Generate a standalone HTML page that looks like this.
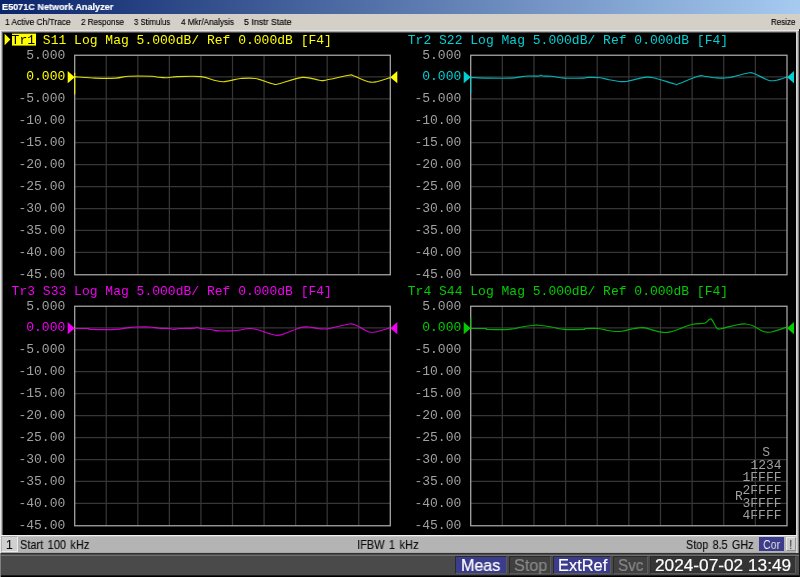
<!DOCTYPE html>
<html lang="en">
<head>
<meta charset="utf-8">
<title>E5071C Network Analyzer</title>
<style>
html,body{margin:0;padding:0;background:#000;}
#root{position:relative;width:800px;height:577px;overflow:hidden;background:#d4d0c8;font-family:"Liberation Sans", "DejaVu Sans", sans-serif;}
#root div,#root span{position:absolute;white-space:nowrap;box-sizing:border-box;}
#root span{display:inline-block;transform-origin:0 0;will-change:transform;}
.title{left:0;top:0;width:800px;height:14px;background:linear-gradient(to right,#0a246a 0%,#a6caf0 100%);}
.tt{color:#fff;font-weight:bold;font-size:9.2px;line-height:11px;-webkit-text-stroke:0.2px #fff;}
.menu{left:0;top:14px;width:800px;height:16px;background:#d4d0c8;}
.mm{color:#000;font-size:9px;line-height:10px;-webkit-text-stroke:0.15px #000;}
.frame{left:0;top:30px;width:799px;height:506px;background:#000;}
.scr{position:absolute;left:3px;top:33px;will-change:transform;}
.chbar{left:1px;top:536px;width:795px;height:17px;background:linear-gradient(to bottom,#c4c4c4 0,#c4c4c4 1px,#b4b4b4 1px,#b4b4b4 16px,#a8a8a8 16px);}
.cc{color:#0c0c0c;-webkit-text-stroke:0.12px #0c0c0c;font-size:12.2px;line-height:14px;word-spacing:1.5px;}
.stbar{left:0;top:553px;width:799px;height:24px;background:linear-gradient(to bottom,#303030 0,#303030 1px,#4c4c4c 1px,#4c4c4c 2px,#707070 2px,#707070 3px,#4a4a4a 3px,#4a4a4a 22px,#1c1c1c 22px,#1c1c1c 23px,#000 23px);border-left:1px solid #808080;}
.sb{top:556px;height:18px;border:1px solid #2a2a2a;border-right-color:#5a5a5a;border-bottom-color:#5a5a5a;}
.ss{font-size:16.4px;line-height:17px;-webkit-text-stroke:0.2px currentColor;}
.on{background:#3c3c8c;}
.off{background:#404040;}
</style>
</head>
<body>
<div id="root">
<div class="title"></div>
<div class="menu"></div>
<div class="frame"></div>
<div style="left:0;top:30px;width:799px;height:1px;background:#e6e6e6;"></div>
<div style="left:0;top:30px;width:1px;height:523px;background:#e8e8e8;"></div>
<div style="left:1px;top:31px;width:798px;height:1px;background:#a8a8a8;"></div>
<div style="left:1px;top:31px;width:1px;height:504px;background:#b4b4b4;"></div>
<div style="left:2px;top:32px;width:797px;height:1px;background:#484848;"></div>
<div style="left:2px;top:32px;width:1px;height:503px;background:#5c5c5c;"></div>
<svg class="scr" width="793" height="502" viewBox="3 33 793 502" font-family='"Liberation Mono", "DejaVu Sans Mono", monospace' font-size="13.0" letter-spacing="0.0112" xml:space="preserve">
<rect x="3" y="33" width="793" height="502" fill="#000"/>
<path d="M106.26 55.25V274.75M74.70 76.80H390.30M137.82 55.25V274.75M74.70 98.75H390.30M169.38 55.25V274.75M74.70 120.70H390.30M200.94 55.25V274.75M74.70 142.65H390.30M232.50 55.25V274.75M74.70 164.60H390.30M264.06 55.25V274.75M74.70 186.55H390.30M295.62 55.25V274.75M74.70 208.50H390.30M327.18 55.25V274.75M74.70 230.45H390.30M358.74 55.25V274.75M74.70 252.40H390.30" stroke="#363636" stroke-width="1.25" fill="none"/>
<rect x="74.70" y="55.25" width="315.60" height="219.50" stroke="#a4a4a4" stroke-width="1.3" fill="none"/>
<rect x="12" y="33.6" width="24" height="12" fill="#ffff00"/>
<path d="M4.6 33.8L10.4 39.5L4.6 45.2Z" fill="#ffff00"/>
<text x="11.60" y="44.05" fill="#000">Tr1</text>
<text x="42.85" y="44.05" fill="#ffff00">S11 Log Mag 5.000dB/ Ref 0.000dB [F4]</text>
<text x="26.24" y="58.50" fill="#a0a0a0">5.000</text>
<text x="26.24" y="80.45" fill="#ffff00">0.000</text>
<text x="18.42" y="102.40" fill="#a0a0a0">-5.000</text>
<text x="18.42" y="124.35" fill="#a0a0a0">-10.00</text>
<text x="18.42" y="146.30" fill="#a0a0a0">-15.00</text>
<text x="18.42" y="168.25" fill="#a0a0a0">-20.00</text>
<text x="18.42" y="190.20" fill="#a0a0a0">-25.00</text>
<text x="18.42" y="212.15" fill="#a0a0a0">-30.00</text>
<text x="18.42" y="234.10" fill="#a0a0a0">-35.00</text>
<text x="18.42" y="256.05" fill="#a0a0a0">-40.00</text>
<text x="18.42" y="278.00" fill="#a0a0a0">-45.00</text>
<path d="M74.7 72.8L74.7 94.0L74.7 77.0C75.2 77.0 74.5 76.8 77.8 77.0C81.1 77.2 88.4 77.9 94.8 78.1C101.2 78.3 110.3 78.4 116.0 78.1C121.7 77.8 122.8 76.5 128.8 76.2C134.8 75.9 147.6 76.1 152.2 76.2C156.8 76.3 154.0 76.8 156.5 77.0C159.0 77.2 163.4 77.8 167.0 77.7C170.6 77.6 172.1 76.8 177.8 76.6C183.5 76.4 195.0 76.0 201.0 76.6C207.0 77.2 210.4 79.3 214.0 80.2C217.6 81.1 219.7 81.6 222.4 81.7C225.1 81.8 227.0 81.1 230.0 80.6C233.0 80.1 236.3 78.8 240.6 78.5C244.8 78.2 250.2 77.6 255.5 78.5C260.8 79.4 268.6 82.9 272.5 83.8C276.4 84.7 274.0 84.9 279.0 83.8C284.0 82.7 295.6 78.0 302.3 77.4C309.0 76.8 315.5 79.7 319.4 80.2C323.3 80.7 320.8 81.0 325.7 80.2C330.6 79.4 344.4 76.0 349.0 75.3C353.6 74.5 350.2 74.6 353.4 75.7C356.6 76.8 364.4 80.7 368.3 81.7C372.2 82.7 373.1 82.4 376.8 81.7C380.5 81.0 388.1 78.3 390.3 77.6" stroke="#ffff00" stroke-width="1.15" fill="none" stroke-linejoin="round" opacity="0.85"/>
<path d="M67.70 71.10L74.70 77.20L67.70 83.30Z" fill="#ffff00"/>
<path d="M397.30 71.10L390.30 77.20L397.30 83.30Z" fill="#ffff00"/>
<path d="M502.33 55.25V274.75M470.70 76.80H787.00M533.96 55.25V274.75M470.70 98.75H787.00M565.59 55.25V274.75M470.70 120.70H787.00M597.22 55.25V274.75M470.70 142.65H787.00M628.85 55.25V274.75M470.70 164.60H787.00M660.48 55.25V274.75M470.70 186.55H787.00M692.11 55.25V274.75M470.70 208.50H787.00M723.74 55.25V274.75M470.70 230.45H787.00M755.37 55.25V274.75M470.70 252.40H787.00" stroke="#363636" stroke-width="1.25" fill="none"/>
<rect x="470.70" y="55.25" width="316.30" height="219.50" stroke="#a4a4a4" stroke-width="1.3" fill="none"/>
<text x="407.80" y="44.05" fill="#00d0d4">Tr2 S22 Log Mag 5.000dB/ Ref 0.000dB [F4]</text>
<text x="422.24" y="58.50" fill="#a0a0a0">5.000</text>
<text x="422.24" y="80.45" fill="#00d0d4">0.000</text>
<text x="414.43" y="102.40" fill="#a0a0a0">-5.000</text>
<text x="414.43" y="124.35" fill="#a0a0a0">-10.00</text>
<text x="414.43" y="146.30" fill="#a0a0a0">-15.00</text>
<text x="414.43" y="168.25" fill="#a0a0a0">-20.00</text>
<text x="414.43" y="190.20" fill="#a0a0a0">-25.00</text>
<text x="414.43" y="212.15" fill="#a0a0a0">-30.00</text>
<text x="414.43" y="234.10" fill="#a0a0a0">-35.00</text>
<text x="414.43" y="256.05" fill="#a0a0a0">-40.00</text>
<text x="414.43" y="278.00" fill="#a0a0a0">-45.00</text>
<path d="M470.7 77.0L470.7 93.0L470.7 77.4C473.5 77.5 481.0 78.0 487.7 78.1C494.4 78.2 505.3 78.3 511.0 78.1C516.7 77.8 518.9 76.9 521.7 76.6C524.5 76.2 525.2 76.1 528.0 76.0C530.8 75.9 536.6 76.2 538.7 76.0C540.9 75.8 540.2 75.1 540.9 75.1C541.6 75.1 541.2 75.8 543.0 76.0C544.8 76.2 548.0 75.9 551.5 76.2C555.0 76.5 559.0 77.8 564.3 78.1C569.6 78.4 579.5 78.2 583.4 78.1C587.3 78.0 584.9 77.5 587.7 77.4C590.5 77.3 596.9 77.3 600.4 77.7C603.9 78.1 605.8 79.2 609.0 79.8C612.2 80.4 616.8 81.2 619.6 81.5C622.4 81.8 624.3 81.7 626.0 81.5C627.7 81.3 626.8 81.3 630.0 80.6C633.2 79.9 641.1 77.9 645.0 77.4C648.9 76.9 648.4 76.6 653.4 77.7C658.4 78.8 670.6 83.0 674.7 84.0C678.8 85.0 674.1 85.3 678.0 84.0C681.9 82.7 693.6 77.5 698.0 76.2C702.4 74.9 701.7 76.0 704.5 76.2C707.3 76.5 711.1 77.5 715.0 77.7C718.9 78.0 722.7 78.5 728.0 77.7C733.3 77.0 742.8 74.0 747.0 73.2C751.2 72.5 749.9 72.0 753.4 73.2C756.9 74.4 764.4 79.0 768.3 80.2C772.2 81.4 773.7 80.7 776.8 80.2C779.9 79.7 785.3 77.5 787.0 77.0" stroke="#00d0d4" stroke-width="1.15" fill="none" stroke-linejoin="round" opacity="0.85"/>
<path d="M463.70 71.10L470.70 77.20L463.70 83.30Z" fill="#00d0d4"/>
<path d="M794.00 71.10L787.00 77.20L794.00 83.30Z" fill="#00d0d4"/>
<path d="M106.26 306.25V525.75M74.70 327.80H390.30M137.82 306.25V525.75M74.70 349.75H390.30M169.38 306.25V525.75M74.70 371.70H390.30M200.94 306.25V525.75M74.70 393.65H390.30M232.50 306.25V525.75M74.70 415.60H390.30M264.06 306.25V525.75M74.70 437.55H390.30M295.62 306.25V525.75M74.70 459.50H390.30M327.18 306.25V525.75M74.70 481.45H390.30M358.74 306.25V525.75M74.70 503.40H390.30" stroke="#363636" stroke-width="1.25" fill="none"/>
<rect x="74.70" y="306.25" width="315.60" height="219.50" stroke="#a4a4a4" stroke-width="1.3" fill="none"/>
<text x="11.60" y="295.05" fill="#f000f0">Tr3 S33 Log Mag 5.000dB/ Ref 0.000dB [F4]</text>
<text x="26.24" y="309.50" fill="#a0a0a0">5.000</text>
<text x="26.24" y="331.45" fill="#f000f0">0.000</text>
<text x="18.42" y="353.40" fill="#a0a0a0">-5.000</text>
<text x="18.42" y="375.35" fill="#a0a0a0">-10.00</text>
<text x="18.42" y="397.30" fill="#a0a0a0">-15.00</text>
<text x="18.42" y="419.25" fill="#a0a0a0">-20.00</text>
<text x="18.42" y="441.20" fill="#a0a0a0">-25.00</text>
<text x="18.42" y="463.15" fill="#a0a0a0">-30.00</text>
<text x="18.42" y="485.10" fill="#a0a0a0">-35.00</text>
<text x="18.42" y="507.05" fill="#a0a0a0">-40.00</text>
<text x="18.42" y="529.00" fill="#a0a0a0">-45.00</text>
<path d="M74.7 328.5C77.0 328.5 85.8 328.4 88.4 328.5C91.0 328.6 85.9 329.2 90.5 329.4C95.1 329.5 110.0 329.6 116.0 329.4C122.0 329.1 123.5 328.3 126.7 327.9C129.9 327.5 131.3 327.1 135.2 327.0C139.1 326.9 146.1 326.8 150.0 327.0C153.9 327.2 155.4 327.9 158.6 328.1C161.8 328.4 166.8 328.3 169.3 328.5C171.8 328.7 171.7 329.4 173.5 329.4C175.3 329.4 176.4 328.7 180.0 328.5C183.6 328.3 192.0 328.3 194.8 328.1C197.6 327.9 196.0 327.3 197.0 327.4C198.0 327.5 198.5 328.1 201.0 328.5C203.5 328.9 208.9 329.4 211.8 329.8C214.7 330.2 215.2 330.7 218.2 330.9C221.2 331.1 226.6 331.0 230.0 330.9C233.4 330.8 235.3 330.6 238.5 330.2C241.7 329.8 245.8 328.6 249.0 328.5C252.2 328.4 253.8 328.8 257.7 329.8C261.6 330.8 268.6 333.6 272.5 334.5C276.4 335.4 276.4 336.0 281.0 334.9C285.6 333.8 295.4 329.0 300.0 327.7C304.6 326.4 305.5 326.8 308.7 327.0C311.9 327.2 316.2 328.4 319.4 328.7C322.6 329.0 323.4 329.4 328.0 328.7C332.6 328.0 342.6 325.2 347.0 324.5C351.4 323.8 350.9 323.3 354.5 324.5C358.1 325.7 364.6 330.5 368.3 331.7C372.0 332.9 373.1 332.3 376.8 331.7C380.5 331.1 388.1 328.4 390.3 327.8" stroke="#f000f0" stroke-width="1.15" fill="none" stroke-linejoin="round" opacity="0.85"/>
<path d="M67.70 322.10L74.70 328.20L67.70 334.30Z" fill="#f000f0"/>
<path d="M397.30 322.10L390.30 328.20L397.30 334.30Z" fill="#f000f0"/>
<path d="M502.33 306.25V525.75M470.70 327.80H787.00M533.96 306.25V525.75M470.70 349.75H787.00M565.59 306.25V525.75M470.70 371.70H787.00M597.22 306.25V525.75M470.70 393.65H787.00M628.85 306.25V525.75M470.70 415.60H787.00M660.48 306.25V525.75M470.70 437.55H787.00M692.11 306.25V525.75M470.70 459.50H787.00M723.74 306.25V525.75M470.70 481.45H787.00M755.37 306.25V525.75M470.70 503.40H787.00" stroke="#363636" stroke-width="1.25" fill="none"/>
<rect x="470.70" y="306.25" width="316.30" height="219.50" stroke="#a4a4a4" stroke-width="1.3" fill="none"/>
<text x="407.80" y="295.05" fill="#00cc00">Tr4 S44 Log Mag 5.000dB/ Ref 0.000dB [F4]</text>
<text x="422.24" y="309.50" fill="#a0a0a0">5.000</text>
<text x="422.24" y="331.45" fill="#00cc00">0.000</text>
<text x="414.43" y="353.40" fill="#a0a0a0">-5.000</text>
<text x="414.43" y="375.35" fill="#a0a0a0">-10.00</text>
<text x="414.43" y="397.30" fill="#a0a0a0">-15.00</text>
<text x="414.43" y="419.25" fill="#a0a0a0">-20.00</text>
<text x="414.43" y="441.20" fill="#a0a0a0">-25.00</text>
<text x="414.43" y="463.15" fill="#a0a0a0">-30.00</text>
<text x="414.43" y="485.10" fill="#a0a0a0">-35.00</text>
<text x="414.43" y="507.05" fill="#a0a0a0">-40.00</text>
<text x="414.43" y="529.00" fill="#a0a0a0">-45.00</text>
<path d="M470.7 317.4L470.7 328.5C473.2 328.5 482.7 328.4 485.5 328.5C488.3 328.6 483.8 329.2 487.7 329.4C491.6 329.5 503.3 329.8 509.0 329.4C514.7 329.0 517.5 327.7 521.7 327.0C526.0 326.3 531.7 325.6 534.5 325.3C537.3 325.0 535.9 325.0 538.7 325.3C541.5 325.6 547.2 326.3 551.5 327.0C555.8 327.7 559.0 329.0 564.3 329.4C569.6 329.8 579.9 329.5 583.4 329.4C586.9 329.2 583.0 328.6 585.5 328.5C588.0 328.4 594.8 328.2 598.3 328.5C601.8 328.8 604.3 329.7 606.8 330.2C609.3 330.7 610.7 331.1 613.2 331.3C615.7 331.5 618.9 331.6 621.7 331.3C624.5 331.0 627.2 330.0 630.0 329.4C632.8 328.8 636.0 328.1 638.5 327.9C641.0 327.6 641.5 327.2 645.0 327.9C648.5 328.6 655.6 331.2 659.8 331.9C664.0 332.6 665.1 333.1 670.4 331.9C675.7 330.7 686.0 325.9 691.7 324.5C697.4 323.1 701.3 324.1 704.5 323.2C707.7 322.3 708.8 318.0 710.9 318.9C713.0 319.8 715.1 327.0 717.2 328.5C719.3 330.0 720.1 328.8 723.6 328.1C727.1 327.4 734.8 325.2 738.5 324.5C742.2 323.8 743.5 323.8 746.0 324.0C748.5 324.2 750.4 324.7 753.4 326.0C756.4 327.3 760.8 330.8 764.0 331.7C767.2 332.6 768.8 332.5 772.6 331.7C776.4 330.9 784.6 327.8 787.0 327.0" stroke="#00cc00" stroke-width="1.15" fill="none" stroke-linejoin="round" opacity="0.85"/>
<path d="M463.70 322.10L470.70 328.20L463.70 334.30Z" fill="#00cc00"/>
<path d="M794.00 322.10L787.00 328.20L794.00 334.30Z" fill="#00cc00"/>
<text x="762.20" y="456.20" fill="#a0a0a0">S</text>
<text x="750.40" y="468.70" fill="#a0a0a0">1234</text>
<text x="742.50" y="481.30" fill="#a0a0a0">1FFFF</text>
<text x="742.50" y="493.80" fill="#a0a0a0">2FFFF</text>
<text x="742.50" y="506.50" fill="#a0a0a0">3FFFF</text>
<text x="742.50" y="518.80" fill="#a0a0a0">4FFFF</text>
<text x="735.00" y="500.40" fill="#a0a0a0">R</text>
</svg>
<div style="left:796px;top:31px;width:1px;height:522px;background:#d8d8d8;"></div>
<div style="left:797px;top:31px;width:1px;height:522px;background:#c0c0c0;"></div>
<div style="left:798px;top:31px;width:1px;height:522px;background:#808080;"></div>
<div style="left:799px;top:29px;width:1px;height:548px;background:#141414;"></div>
<div style="left:1px;top:535px;width:796px;height:1px;background:#f0f0f0;"></div>
<div class="chbar">
<div style="left:0;top:0;width:17px;height:16px;background:#d0d0d0;border:1px solid #b0b0b0;border-right-color:#ececec;border-bottom-color:#ececec;"></div>
<div style="left:758px;top:1px;width:25px;height:14px;background:#3c3c8c;"></div>
<div style="left:785px;top:1px;width:10px;height:14px;background:#cccccc;border:1px solid #e8e8e8;border-right-color:#909090;border-bottom-color:#909090;"></div>
</div>
<div class="stbar"></div>
<div class="sb on" style="left:455px;width:52px;"></div>
<div class="sb off" style="left:509px;width:42px;"></div>
<div class="sb on" style="left:553px;width:58px;"></div>
<div class="sb off" style="left:613px;width:35px;"></div>
<div class="sb" style="left:650px;width:146px;background:#343434;"></div>
<span class="tt" style="left:1.60px;top:2.2px;transform:scaleX(0.9887);">E5071C Network Analyzer</span>
<span class="mm" style="left:5.00px;top:16.8px;transform:scaleX(0.9271);">1 Active Ch/Trace</span>
<span class="mm" style="left:81.00px;top:16.8px;transform:scaleX(0.8953);">2 Response</span>
<span class="mm" style="left:134.40px;top:16.8px;transform:scaleX(0.8609);">3 Stimulus</span>
<span class="mm" style="left:181.00px;top:16.8px;transform:scaleX(0.9049);">4 Mkr/Analysis</span>
<span class="mm" style="left:244.00px;top:16.8px;transform:scaleX(0.9811);">5 Instr State</span>
<span class="mm" style="left:770.60px;top:16.8px;transform:scaleX(0.8871);">Resize</span>
<span class="cc" style="left:6.20px;top:538.1px;transform:scaleX(1.0000);">1</span>
<span class="cc" style="left:19.75px;top:538.1px;transform:scaleX(0.9024);">Start 100 kHz</span>
<span class="cc" style="left:356.59px;top:538.1px;transform:scaleX(0.9057);">IFBW 1 kHz</span>
<span class="cc" style="left:685.60px;top:538.1px;transform:scaleX(0.8874);">Stop 8.5 GHz</span>
<span class="cc" style="left:762.90px;top:538.1px;transform:scaleX(0.8734);color:#fff;">Cor</span>
<span class="cc" style="left:789.20px;top:538.1px;transform:scaleX(1.0000);color:#606060;">!</span>
<span class="ss" style="left:461.02px;top:557.3px;transform:scaleX(0.9772);color:#fff;">Meas</span>
<span class="ss" style="left:513.50px;top:557.3px;transform:scaleX(0.9880);color:#888;">Stop</span>
<span class="ss" style="left:557.70px;top:557.3px;transform:scaleX(0.9972);color:#fff;">ExtRef</span>
<span class="ss" style="left:618.30px;top:557.3px;transform:scaleX(0.9253);color:#888;">Svc</span>
<span class="ss" style="left:655.00px;top:557.3px;transform:scaleX(1.0518);color:#fff;">2024-07-02 13:49</span>
</div>
</body>
</html>
